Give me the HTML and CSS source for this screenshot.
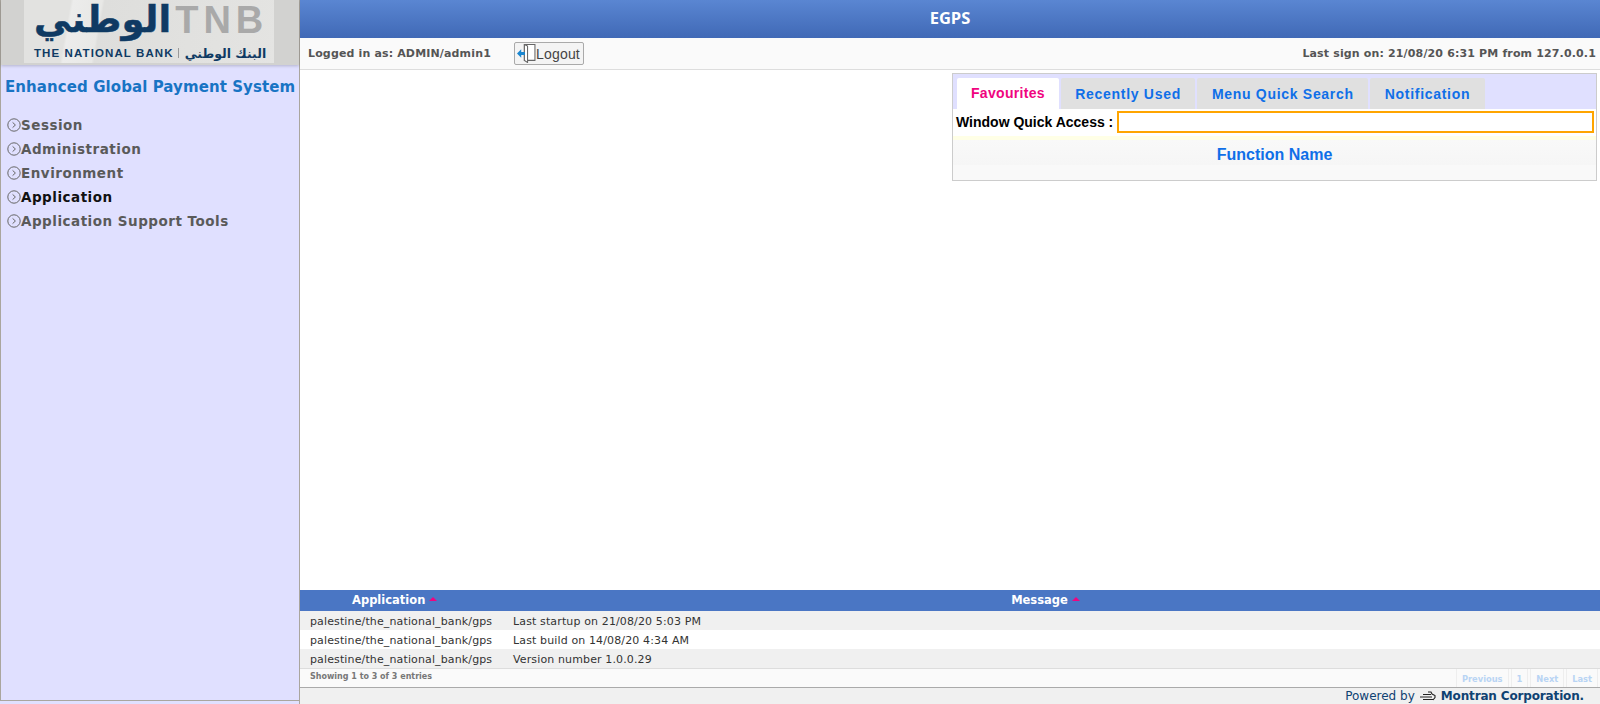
FILE: index.html
```html
<!DOCTYPE html>
<html>
<head>
  <title>EGPS</title>
  <link rel="stylesheet" href="styles.css">
</head>
<body>
  <div class="sidebar">
    <div class="sidebar-inner">
      <div class="logo-band">
        <div class="logo">
          <div class="logo-top">
            <span class="logo-ar" dir="rtl">الوطني</span>
            <span class="logo-tnb">TNB</span>
          </div>
          <div class="logo-bottom">
            <span>THE NATIONAL BANK</span>
            <span class="logo-sep"></span>
            <span class="logo-ar-small" dir="rtl">البنك الوطني</span>
          </div>
        </div>
      </div>
      <div class="system-name">Enhanced Global Payment System</div>
      <ul class="menu">
        <li><svg class="arrow" viewBox="0 0 14 14"><circle cx="7" cy="7" r="6.2"/><path d="M5.6 4.4 8.4 7 5.6 9.6"/></svg>Session</li>
        <li><svg class="arrow" viewBox="0 0 14 14"><circle cx="7" cy="7" r="6.2"/><path d="M5.6 4.4 8.4 7 5.6 9.6"/></svg>Administration</li>
        <li><svg class="arrow" viewBox="0 0 14 14"><circle cx="7" cy="7" r="6.2"/><path d="M5.6 4.4 8.4 7 5.6 9.6"/></svg>Environment</li>
        <li class="current"><svg class="arrow" viewBox="0 0 14 14"><circle cx="7" cy="7" r="6.2"/><path d="M5.6 4.4 8.4 7 5.6 9.6"/></svg>Application</li>
        <li><svg class="arrow" viewBox="0 0 14 14"><circle cx="7" cy="7" r="6.2"/><path d="M5.6 4.4 8.4 7 5.6 9.6"/></svg>Application Support Tools</li>
      </ul>
    </div>
  </div>

  <div class="main">
    <div class="title-bar">EGPS</div>
    <div class="info-bar">
      <span class="logged">Logged in as: ADMIN/admin1</span>
      <button class="logout">
        <svg class="logout-icon" viewBox="0 0 18 18">
          <path class="door" d="M7 .5h10v15H7z"/>
          <path class="door" d="M7 .5l3 1.5v15.5l-3-2z"/>
          <path class="door-arrow" d="M0 9l4-4v2.5h3.5v3H4V13z"/>
        </svg>Logout
      </button>
      <span class="last-sign">Last sign on: 21/08/20 6:31 PM from 127.0.0.1</span>
    </div>

    <div class="content">
      <div class="quick">
        <div class="tabs">
          <div class="tab active">Favourites</div>
          <div class="tab">Recently Used</div>
          <div class="tab">Menu Quick Search</div>
          <div class="tab">Notification</div>
        </div>
        <div class="quick-body">
          <div class="quick-row">
            <label for="quick-input">Window Quick Access :</label>
            <input type="text" id="quick-input">
          </div>
          <div class="quick-strip"></div>
          <div class="quick-head">Function Name</div>
        </div>
      </div>
    </div>

    <div class="messages">
      <div class="msg-head">
        <div class="col-app">Application<span class="sort"></span></div>
        <div class="col-msg">Message<span class="sort"></span></div>
      </div>
      <div class="msg-row odd"><span class="cell-app">palestine/the_national_bank/gps</span><span>Last startup on 21/08/20 5:03 PM</span></div>
      <div class="msg-row"><span class="cell-app">palestine/the_national_bank/gps</span><span>Last build on 14/08/20 4:34 AM</span></div>
      <div class="msg-row odd"><span class="cell-app">palestine/the_national_bank/gps</span><span>Version number 1.0.0.29</span></div>
      <div class="msg-foot">
        <span class="entries">Showing 1 to 3 of 3 entries</span>
        <div class="pager">
          <span>Previous</span><span>1</span><span>Next</span><span>Last</span>
        </div>
      </div>
    </div>

    <div class="powered">
      Powered by
      <svg class="montran" viewBox="0 0 16 11">
        <path d="M3 3.5h8M0 6h12M3 8.5h10"/>
        <path d="M8 1h3l1 2 3 1.5v2L13 9"/>
      </svg>
      <b>Montran Corporation.</b>
    </div>
  </div>
</body>
</html>
```

FILE: styles.css
```css
html, body {
  height: 100%;
}

body {
  margin: 0;
  display: flex;
  height: 704px;
  overflow: hidden;
  background: #fff;
  font-family: "DejaVu Sans", Verdana, sans-serif;
}

.sidebar {
  width: 300px;
  height: 704px;
  flex: none;
  box-sizing: border-box;
  background: #e0e0ff;
  border-right: 1px solid #aaa69e;
}

.sidebar-inner {
  height: 701px;
  box-sizing: border-box;
  border-left: 1px solid #aaa69e;
  border-bottom: 1px solid #aaa69e;
}

.logo-band {
  height: 65px;
  background: #d2d2d0;
  padding-left: 23px;
  box-shadow: 0 1px 3px rgba(0,0,0,0.2);
}

.logo {
  width: 250px;
  height: 63px;
  box-sizing: border-box;
  padding-left: 10px;
  background: linear-gradient(100deg, #e2e2e0 18%, #ececeb 19%, #e8e8e6 30%, #dededc 31%, #e4e4e2 100%);
}

.logo-top {
  display: flex;
  align-items: center;
  height: 40px;
  margin-bottom: 4px;
}

.logo-ar {
  flex: none;
  font-weight: bold;
  font-size: 37px;
  line-height: 40px;
  color: #0f3a63;
  -webkit-text-stroke: 0.5px #0f3a63;
  white-space: nowrap;
}

.logo-tnb {
  margin-left: 4px;
  font-family: "Liberation Sans", Arial, sans-serif;
  font-weight: bold;
  font-size: 38px;
  line-height: 40px;
  letter-spacing: 5px;
  color: #a9a9a9;
}

.logo-bottom {
  display: flex;
  align-items: center;
  gap: 4px;
  height: 18px;
  font-family: "Liberation Sans", Arial, sans-serif;
  font-weight: bold;
  font-size: 11.5px;
  letter-spacing: 1.1px;
  color: #0f3a63;
  white-space: nowrap;
}

.logo-sep {
  width: 1px;
  height: 10px;
  background: #999;
}

.logo-ar-small {
  font-family: "DejaVu Sans", sans-serif;
  font-size: 12.5px;
  letter-spacing: 0;
  margin-left: 2px;
}

.system-name {
  margin-top: 13px;
  padding-left: 4px;
  font-size: 15px;
  font-weight: bold;
  letter-spacing: 0.08px;
  line-height: 18px;
  color: #1874c4;
  white-space: nowrap;
}

.menu {
  list-style: none;
  margin: 17px 0 0;
  padding: 0 0 0 6px;
}

.menu li {
  display: flex;
  align-items: center;
  height: 24px;
  font-size: 13.5px;
  font-weight: bold;
  letter-spacing: 0.5px;
  color: #5a5a5a;
}

.menu li.current {
  color: #111;
}

.arrow {
  width: 14px;
  height: 14px;
  fill: none;
  stroke: #666;
  stroke-width: 1;
}

.main {
  flex: 1;
  min-width: 0;
  display: flex;
  flex-direction: column;
}

.title-bar {
  height: 38px;
  flex: none;
  background: linear-gradient(#5a86d2, #4069b6);
  color: #fff;
  font-family: "Open Sans", sans-serif;
  font-weight: bold;
  font-size: 16.5px;
  line-height: 36px;
  text-align: center;
}

.info-bar {
  height: 32px;
  flex: none;
  display: flex;
  align-items: center;
  box-sizing: border-box;
  padding: 0 4px 0 8px;
  background: #fafafa;
  border-bottom: 1px solid #ddd;
  font-size: 11px;
  font-weight: bold;
  letter-spacing: 0.15px;
  color: #555;
}

.logout {
  display: flex;
  align-items: center;
  height: 23px;
  margin-left: 23px;
  padding: 0 3px 0 2px;
  background: #f4f4f4;
  border: 1px solid #aaa;
  border-radius: 2px;
  font-family: "Liberation Sans", Arial, sans-serif;
  font-size: 14px;
  letter-spacing: 0.2px;
  color: #444;
}

.logout-icon {
  width: 19px;
  height: 19px;
}

.door {
  fill: #fff;
  stroke: #666;
  stroke-width: 1;
}

.door-arrow {
  fill: #1a86d0;
}

.last-sign {
  margin-left: auto;
}

.content {
  flex: 1;
  display: flex;
  justify-content: flex-end;
  align-items: flex-start;
  padding-top: 3px;
}

.quick {
  width: 643px;
  margin-right: 3px;
  border: 1px solid #ccc;
  background: #e0e0ff;
  font-family: "Liberation Sans", Arial, sans-serif;
}

.tabs {
  display: flex;
  gap: 2px;
  padding: 4px 0 0 4px;
}

.tab {
  height: 31px;
  padding: 0 14.5px;
  background: #e0e0e0;
  border-radius: 2px 2px 0 0;
  font-size: 14px;
  font-weight: bold;
  letter-spacing: 0.7px;
  line-height: 32px;
  color: #0f6fe8;
}

.tab.active {
  padding: 0 14px;
  background: #fff;
  color: #f0047f;
  letter-spacing: 0.3px;
  line-height: 30px;
}

.quick-body {
  background: #f9f9f9;
  height: 71px;
}

.quick-row {
  display: flex;
  height: 27px;
  box-sizing: border-box;
  background: #fff;
  padding: 2px 2px 0 3px;
}

.quick-row label {
  font-size: 14px;
  font-weight: bold;
  line-height: 22px;
  color: #000;
  margin-right: 4px;
  white-space: nowrap;
}

.quick-row input {
  flex: 1;
  min-width: 0;
  height: 22px;
  box-sizing: border-box;
  border: 2px solid #ffa500;
  outline: none;
  background: #fff;
}

.quick-strip {
  height: 4px;
  background: #ffffe6;
}

.quick-head {
  height: 25px;
  font-size: 16px;
  font-weight: bold;
  line-height: 30px;
  text-align: center;
  color: #0f6fe8;
  background: linear-gradient(#f9f9f9, #f6f6f6);
}

.messages {
  flex: none;
  font-size: 11px;
  color: #333;
}

.msg-head {
  display: flex;
  height: 21px;
  background: #4a76c4;
  color: #fff;
  font-size: 11.5px;
  font-weight: bold;
  line-height: 21px;
}

.col-app {
  width: 221px;
  box-sizing: border-box;
  padding-left: 52px;
}

.col-msg {
  flex: 1;
  text-align: center;
  padding-right: 30px;
}

.sort {
  display: inline-block;
  width: 0;
  height: 0;
  margin-left: 4px;
  vertical-align: 3px;
  border-left: 4px solid transparent;
  border-right: 4px solid transparent;
  border-bottom: 4px solid #f0047f;
}

.msg-row {
  display: flex;
  height: 19px;
  line-height: 21px;
  letter-spacing: 0.13px;
  background: #fff;
}

.msg-row.odd {
  background: #f0f0f0;
}

.cell-app {
  width: 203px;
  margin-left: 10px;
  flex: none;
}

.msg-foot {
  display: flex;
  justify-content: space-between;
  height: 20px;
  box-sizing: border-box;
  padding-left: 10px;
  background: #fafafa;
  border-top: 1px solid #ddd;
  border-bottom: 1px solid #aaa;
}

.entries {
  font-size: 8px;
  font-weight: bold;
  line-height: 15px;
  color: #777;
}

.pager {
  display: flex;
  gap: 2px;
  padding-right: 2px;
}

.pager span {
  padding: 0 5px;
  border-left: 1px solid #eee;
  border-right: 1px solid #eee;
  font-size: 8.3px;
  font-weight: bold;
  line-height: 21px;
  color: #b8d4f4;
}

.powered {
  height: 16px;
  flex: none;
  display: flex;
  align-items: center;
  justify-content: flex-end;
  gap: 5px;
  padding-right: 16px;
  background: #f0f0f0;
  font-size: 12px;
  color: #0f4272;
}

.powered b {
  letter-spacing: -0.15px;
}

.montran {
  width: 16px;
  height: 11px;
  fill: none;
  stroke: #222;
  stroke-width: 1.1;
}
```
